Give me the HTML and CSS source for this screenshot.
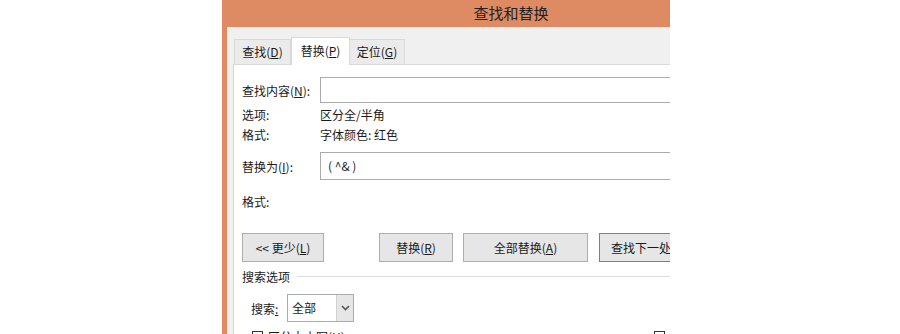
FILE: index.html
```html
<!DOCTYPE html>
<html lang="zh-CN">
<head>
  <meta charset="UTF-8">
  <title>查找和替换</title>
  <link rel="stylesheet" href="styles.css">
</head>
<body>
  <div class="frame">
    <div class="dialog">
      <div class="titlebar">查找和替换</div>
      <div class="client">
        <div class="tabs">
          <div class="tab">查找(<u>D</u>)</div>
          <div class="tab active">替换(<u>P</u>)</div>
          <div class="tab">定位(<u>G</u>)</div>
        </div>
        <div class="panel">
          <div class="row field first">
            <span class="label">查找内容(<u>N</u>):</span>
            <div class="input"></div>
          </div>
          <div class="row info opt">
            <span class="label">选项:</span>
            <span>区分全/半角</span>
          </div>
          <div class="row info">
            <span class="label">格式:</span>
            <span>字体颜色: 红色</span>
          </div>
          <div class="row field second">
            <span class="label">替换为(<u>I</u>):</span>
            <div class="input tall">( ^&amp; )</div>
          </div>
          <div class="row info fmt2">
            <span class="label">格式:</span>
          </div>
          <div class="buttons">
            <div class="btn less">&lt;&lt; 更少(<u>L</u>)</div>
            <div class="btn replace">替换(<u>R</u>)</div>
            <div class="btn all">全部替换(<u>A</u>)</div>
            <div class="btn next">查找下一处(<u>F</u>)</div>
          </div>
          <div class="group">
            <span>搜索选项</span>
            <div class="rule"></div>
          </div>
          <div class="search">
            <span class="search-label">搜索<u>:</u></span>
            <div class="select">
              <span class="select-value">全部</span>
              <span class="select-arrow">
                <svg width="9" height="6" viewBox="0 0 9 6"><path d="M1 1 L4.5 4.5 L8 1" fill="none" stroke="#555" stroke-width="1.6"/></svg>
              </span>
            </div>
          </div>
          <div class="checks">
            <span class="check"><span class="box"></span>区分大小写(<u>H</u>)</span>
            <span class="box right"></span>
          </div>
        </div>
      </div>
    </div>
  </div>
</body>
</html>
```

FILE: styles.css
```css
body {
  margin: 0;
  background: #fff;
  font-family: "Noto Sans CJK SC", "Liberation Sans", sans-serif;
  font-size: 12px;
  color: #1a1a1a;
  height: 334px;
  overflow: hidden;
  white-space: nowrap;
}
u {
  text-decoration: underline;
  text-underline-offset: 1px;
}
.frame {
  margin-left: 222px;
  width: 448px;
  height: 334px;
  overflow: hidden;
}
.dialog {
  width: 572px;
  background: #de8a63;
  padding: 0 5px;
}
.titlebar {
  height: 27px;
  line-height: 25px;
  text-align: center;
  font-size: 15px;
  color: #222;
  padding-right: 4px;
}
.client {
  background: #f0f0f0;
  height: 320px;
  padding-top: 9px;
}
.tabs {
  display: flex;
  align-items: flex-end;
  padding-left: 7px;
  height: 28px;
}
.tab {
  box-sizing: border-box;
  height: 25px;
  line-height: 23px;
  border: 1px solid #d9d9d9;
  border-bottom: none;
  background: #ebebeb;
  text-align: center;
}
.tab:first-child {
  width: 57px;
}
.tab.active {
  width: 59px;
  height: 28px;
  line-height: 25px;
  background: #fff;
  margin-bottom: -1px;
  position: relative;
  z-index: 1;
}
.tab:last-child {
  width: 55px;
  border-left: none;
}
.panel {
  margin-left: 6px;
  background: #fff;
  border: 1px solid #d9d9d9;
  height: 300px;
  padding-left: 8px;
}
.row {
  display: flex;
  align-items: center;
}
.label {
  width: 78px;
  flex-shrink: 0;
}
.field.first {
  margin-top: 12px;
}
.field.second {
  margin-top: 8px;
}
.input {
  box-sizing: border-box;
  flex: 1;
  height: 26px;
  border: 1px solid #ababab;
  padding-left: 7px;
  line-height: 24px;
}
.input.tall {
  height: 28px;
  line-height: 25px;
}
.info {
  height: 20px;
}
.info.opt {
  margin-top: 1px;
}
.fmt2 {
  margin-top: 11px;
}
.buttons {
  display: flex;
  margin-top: 22px;
}
.btn {
  box-sizing: border-box;
  height: 29px;
  line-height: 27px;
  text-align: center;
  border: 1px solid #adadad;
  background: #e6e6e6;
  flex-shrink: 0;
}
.btn.less {
  width: 82px;
}
.btn.replace {
  width: 74px;
  margin-left: 55px;
}
.btn.all {
  width: 125px;
  margin-left: 10px;
}
.btn.next {
  width: 125px;
  margin-left: 11px;
  border-color: #3c8fe0;
  text-align: left;
  padding-left: 11px;
}
.group {
  display: flex;
  align-items: center;
  margin-top: 5px;
  height: 18px;
}
.rule {
  flex: 1;
  height: 1px;
  background: #dcdcdc;
  margin-left: 7px;
}
.search {
  display: flex;
  align-items: center;
  margin-top: 9px;
  padding-left: 9px;
}
.search-label {
  width: 36px;
}
.select {
  box-sizing: border-box;
  width: 67px;
  height: 28px;
  border: 1px solid #ababab;
  display: flex;
}
.select-value {
  flex: 1;
  padding-left: 4px;
  line-height: 26px;
}
.select-arrow {
  width: 16px;
  background: #e6e6e6;
  border-left: 1px solid #d0d0d0;
  display: flex;
  align-items: center;
  justify-content: center;
}
.checks {
  display: flex;
  margin-top: 8px;
  padding-left: 10px;
}
.check {
  display: flex;
  align-items: flex-start;
  line-height: 13px;
}
.box {
  box-sizing: border-box;
  width: 11px;
  height: 11px;
  border: 1px solid #333;
  margin-right: 5px;
  margin-top: 1px;
}
.box.right {
  margin-left: 309px;
}
```
